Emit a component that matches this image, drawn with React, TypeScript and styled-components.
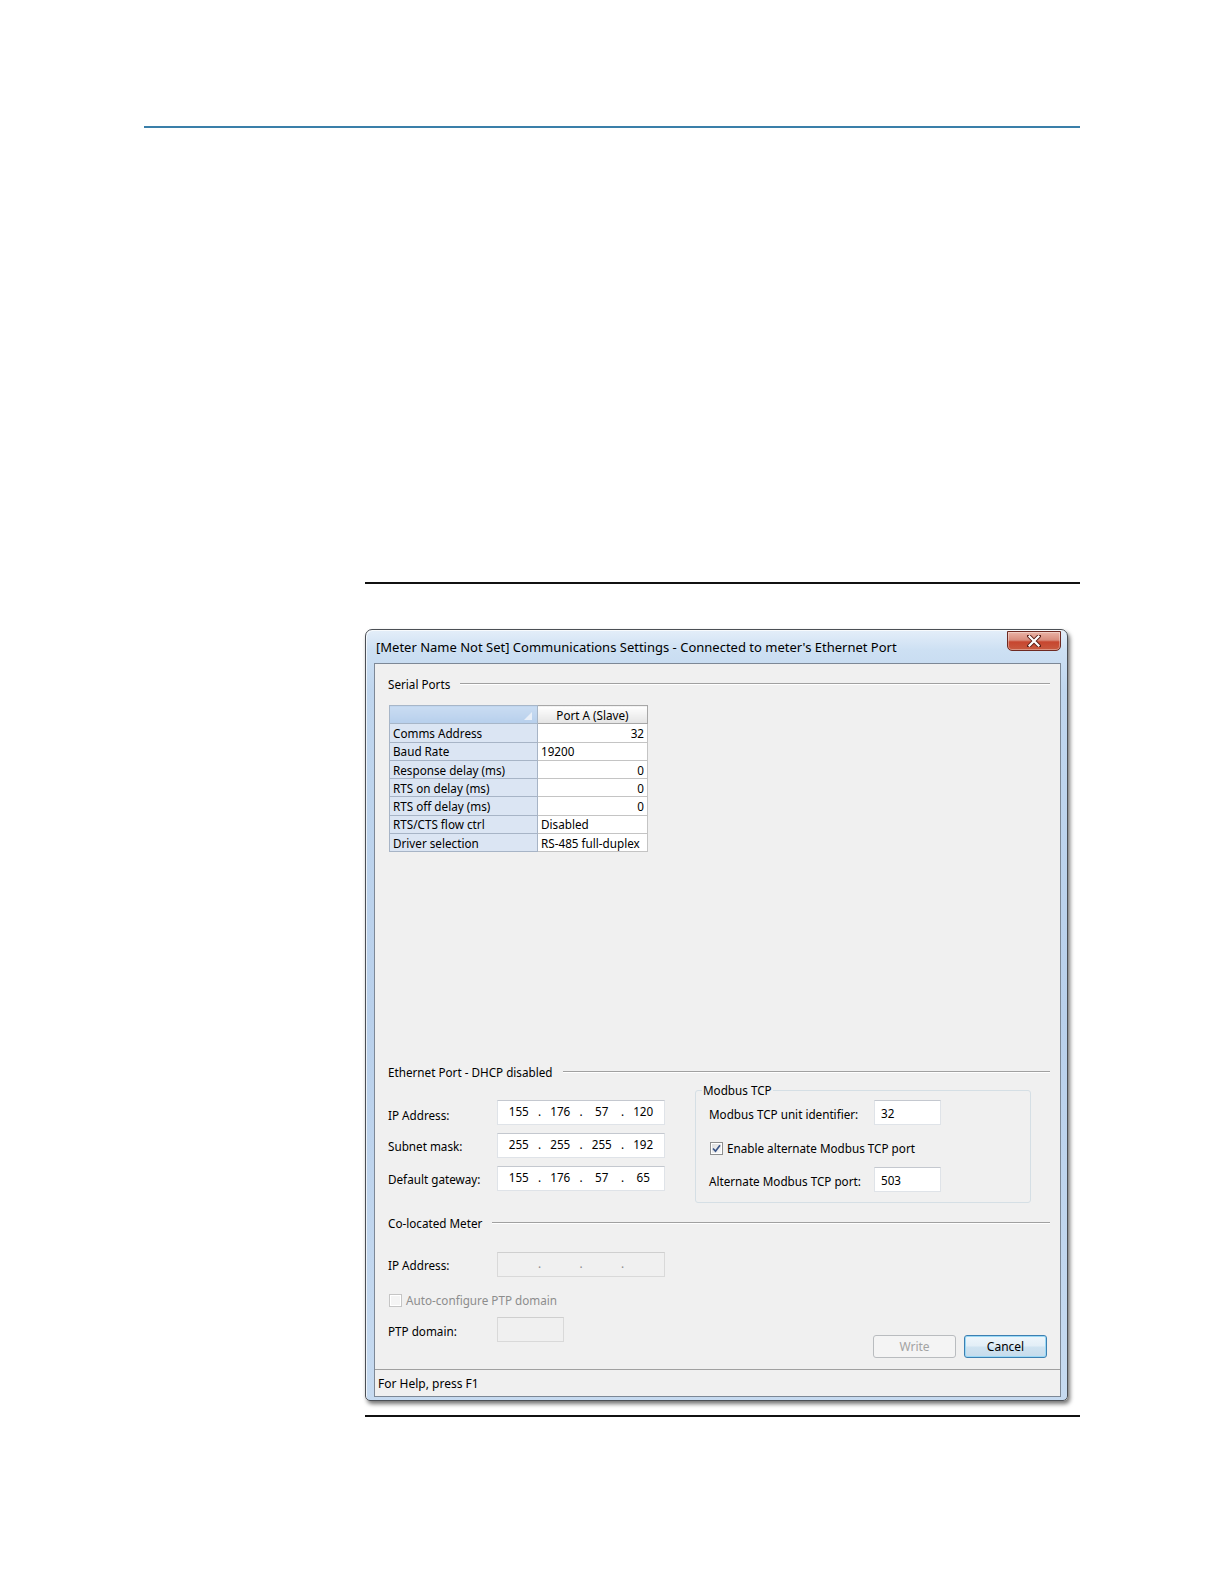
import React from 'react';
import styled, { createGlobalStyle, css } from 'styled-components';

const UI_FONT = '"Noto Sans", "Open Sans", "Liberation Sans", sans-serif';

const GlobalStyle = createGlobalStyle`
	html, body {
		margin: 0;
		padding: 0;
		background: #fff;
	}
	body {
		font-family: ${UI_FONT};
		font-size: 11.7px;
		color: #000;
	}
`;

const TITLE = "[Meter Name Not Set] Communications Settings - Connected to meter's Ethernet Port";

const Page = styled.div`
	width: 1224px;
	height: 1584px;
	padding-top: 126px;
	box-sizing: border-box;
	overflow: hidden;
`;

const TopRule = styled.div`
	margin-left: 144px;
	width: 936px;
	height: 2px;
	background: #3a7fa9;
`;

const Figure = styled.div`
	margin-left: 365px;
	width: 715px;
`;

const Blank = styled.div`
	height: 454px;
`;

const Rule = styled.div<{ gap: number }>`
	margin-top: ${({ gap }) => gap}px;
	height: 2px;
	background: #111;
`;

const Window = styled.div`
	margin-top: 45px;
	width: 703px;
	height: 772px;
	box-sizing: border-box;
	border: 1px solid #4b4f55;
	border-radius: 7px 7px 5px 5px;
	padding: 0 6px 3px 8px;
	display: flex;
	flex-direction: column;
	background: linear-gradient(180deg, #e4eef9 0px, #cde0f3 20px, #c0d6ee 60px, #b9d0eb 50%, #c6daf0 100%);
	box-shadow: 2px 3px 4px rgba(0, 0, 0, 0.55), inset 1px 1px 0 rgba(255, 255, 255, 0.7);
`;

const TitleBar = styled.div`
	height: 33px;
	display: flex;
	align-items: center;
	padding-left: 2px;
`;

const TitleText = styled.div`
	flex: 1;
	font-size: 13px;
	white-space: nowrap;
	color: #000;
`;

const CloseButton = styled.div`
	align-self: flex-start;
	margin-top: 1px;
	width: 54px;
	height: 20px;
	box-sizing: border-box;
	border: 1px solid #6e2a22;
	border-radius: 0 0 5px 5px;
	background: linear-gradient(180deg, #eab3a6 0%, #d88c7c 45%, #c7462f 55%, #c85a40 100%);
	display: flex;
	align-items: center;
	justify-content: center;
	box-shadow: inset 0 0 0 1px rgba(255, 255, 255, 0.35);
`;

const Client = styled.div`
	flex: 1;
	display: flex;
	flex-direction: column;
	border: 1px solid #7d8896;
	background: #f0f0f0;
`;

const Body = styled.div`
	flex: 1;
	display: flex;
	flex-direction: column;
	padding: 12px 10px 0 13px;
`;

const StatusBar = styled.div`
	height: 27px;
	box-sizing: border-box;
	border-top: 1px solid #a0a0a0;
	padding-left: 3px;
	display: flex;
	align-items: center;
	font-size: 12px;
`;

const GroupHeader = styled.div<{ top: number }>`
	margin-top: ${({ top }) => top}px;
	height: 16px;
	display: flex;
	align-items: center;
	white-space: nowrap;
	&::after {
		content: '';
		flex: 1;
		margin-left: 10px;
		border-top: 1px solid #a0a0a0;
		border-bottom: 1px solid #fff;
	}
`;

const Grid = styled.table`
	margin: 13px 0 0 1px;
	border-collapse: collapse;
	width: 259px;
	table-layout: fixed;
	border: 1px solid #8c8c8c;
	td, th {
		padding: 0 3px;
		height: 17.3px;
		line-height: 16px;
		font-weight: normal;
		white-space: nowrap;
		overflow: hidden;
	}
`;

const CornerCell = styled.th`
	position: relative;
	width: 141px;
	background: linear-gradient(180deg, #c9dcf2, #b7cfec);
	border: 1px solid #a7b6c8;
	svg {
		position: absolute;
		right: 5px;
		bottom: 3px;
	}
`;

const HeadCell = styled.th`
	height: 18px;
	background: linear-gradient(180deg, #ffffff, #f1f1f1 50%, #e4e4e4);
	border: 1px solid #a7a7a7;
	text-align: center;
`;

const NameCell = styled.td`
	background: #dbe5f3;
	border: 1px solid #a7b4c6;
	text-align: left;
`;

const ValueCell = styled.td<{ right?: boolean }>`
	background: #fff;
	border: 1px solid #c4c4c4;
	text-align: ${({ right }) => (right ? 'right' : 'left')};
`;

const EthernetSection = styled.div`
	display: flex;
	align-items: flex-start;
`;

const FieldColumn = styled.div`
	margin-top: 20px;
	display: flex;
	flex-direction: column;
	gap: 8px;
`;

const FieldRow = styled.div<{ top?: number }>`
	display: flex;
	align-items: flex-start;
	margin-top: ${({ top }) => top ?? 0}px;
`;

const FieldLabel = styled.div<{ width: number; drop?: number; disabled?: boolean }>`
	width: ${({ width }) => width}px;
	line-height: 16px;
	margin-top: ${({ drop }) => drop ?? 5}px;
	white-space: nowrap;
	color: ${({ disabled }) => (disabled ? '#8d8d8d' : '#000')};
`;

const TextBox = styled.div<{ width: number; disabled?: boolean }>`
	width: ${({ width }) => width}px;
	height: 25px;
	box-sizing: border-box;
	padding: 0 6px;
	display: flex;
	align-items: center;
	border: 1px solid #dfe3e8;
	border-top-color: #c4c8cf;
	background: ${({ disabled }) => (disabled ? '#f0f0f0' : '#fff')};
	color: ${({ disabled }) => (disabled ? '#8d8d8d' : '#000')};
	${({ disabled }) =>
		disabled &&
		css`
			border-color: #d9d9d9;
			border-top-color: #cfcfcf;
		`}
`;

const IpBox = styled(TextBox)`
	padding: 0 2px;
`;

const Octet = styled.span`
	width: 38px;
	text-align: center;
	margin-top: -3px;
`;

const Dot = styled.span`
	width: 4px;
	text-align: center;
	margin-top: -3px;
`;

const ModbusBox = styled.fieldset`
	margin: 2px 0 0 30px;
	width: 336px;
	box-sizing: border-box;
	padding: 0 0 10px 6px;
	border: 1px solid #d5dfe5;
	border-radius: 3px;
	min-inline-size: 0;
`;

const Legend = styled.legend`
	padding: 0 1px;
	line-height: 16px;
`;

const ModbusRows = styled.div`
	padding-left: 7px;
	display: flex;
	flex-direction: column;
`;

const CheckRow = styled.div<{ top: number; disabled?: boolean }>`
	margin-top: ${({ top }) => top}px;
	height: 16px;
	display: flex;
	align-items: center;
	gap: 4px;
	padding-left: 1px;
	color: ${({ disabled }) => (disabled ? '#8d8d8d' : '#000')};
`;

const CheckBoxFrame = styled.span<{ disabled?: boolean }>`
	width: 13px;
	height: 13px;
	box-sizing: border-box;
	border: 1px solid ${({ disabled }) => (disabled ? '#c5c5c5' : '#8e8f8f')};
	background: ${({ disabled }) => (disabled ? '#f4f4f4' : 'linear-gradient(135deg, #dcdcdc, #fbfbfb)')};
	box-shadow: inset 0 0 0 1px #fff;
	display: flex;
	align-items: center;
	justify-content: center;
`;

const BottomRow = styled.div`
	margin-top: 9px;
	min-height: 41px;
	display: flex;
	justify-content: space-between;
`;

const ButtonGroup = styled.div`
	align-self: flex-end;
	display: flex;
	gap: 8px;
	margin-right: 3px;
`;

const PushButton = styled.div<{ primary?: boolean; disabled?: boolean }>`
	width: 83px;
	height: 23px;
	box-sizing: border-box;
	border-radius: 3px;
	display: flex;
	align-items: center;
	justify-content: center;
	font-size: 12px;
	${({ primary, disabled }) =>
		disabled
			? css`
					border: 1px solid #b9bcbf;
					background: #f4f4f4;
					color: #a3a3a3;
			  `
			: primary
			? css`
					border: 1px solid #3c7fb1;
					background: linear-gradient(180deg, #eef6fb 0%, #e2eef7 48%, #cfe3f1 52%, #c6dbeb 100%);
					box-shadow: inset 0 0 0 1px #9ad8f5;
					color: #000;
			  `
			: css`
					border: 1px solid #707070;
					background: linear-gradient(180deg, #f2f2f2, #ebebeb 50%, #dddddd 50%, #cfcfcf);
			  `}
`;

const CornerMark = () => (
	<svg width="8" height="8" viewBox="0 0 8 8">
		<polygon points="8,0 8,8 0,8" fill="#e9eff8" />
	</svg>
);

const CloseGlyph = () => (
	<svg width="14" height="12" viewBox="0 0 14 12">
		<path d="M2 1 L12 11 M12 1 L2 11" stroke="#5a1e17" strokeWidth="4" strokeLinecap="square" />
		<path d="M2.5 1.5 L11.5 10.5 M11.5 1.5 L2.5 10.5" stroke="#fff" strokeWidth="2.2" strokeLinecap="square" />
	</svg>
);

const CheckGlyph = () => (
	<svg width="9" height="9" viewBox="0 0 9 9">
		<path d="M1 4.5 L3.5 7.2 L8 1.2" stroke="#3c5688" strokeWidth="1.7" fill="none" />
	</svg>
);

const CheckBox = ({ checked, disabled }: { checked?: boolean; disabled?: boolean }) => (
	<CheckBoxFrame disabled={disabled}>{checked && <CheckGlyph />}</CheckBoxFrame>
);

const IpAddress = ({ parts, disabled }: { parts: string[]; disabled?: boolean }) => (
	<IpBox width={168} disabled={disabled}>
		{parts.map((p, i) => (
			<React.Fragment key={i}>
				{i > 0 && <Dot>.</Dot>}
				<Octet>{p}</Octet>
			</React.Fragment>
		))}
	</IpBox>
);

const serialRows: { name: string; value: string; right?: boolean }[] = [
	{ name: 'Comms Address', value: '32', right: true },
	{ name: 'Baud Rate', value: '19200' },
	{ name: 'Response delay (ms)', value: '0', right: true },
	{ name: 'RTS on delay (ms)', value: '0', right: true },
	{ name: 'RTS off delay (ms)', value: '0', right: true },
	{ name: 'RTS/CTS flow ctrl', value: 'Disabled' },
	{ name: 'Driver selection', value: 'RS-485 full-duplex' },
];

export default function App() {
	return (
		<Page>
			<GlobalStyle />
			<TopRule />
			<Figure>
				<Blank />
				<Rule gap={0} />
				<Window>
					<TitleBar>
						<TitleText>{TITLE}</TitleText>
						<CloseButton>
							<CloseGlyph />
						</CloseButton>
					</TitleBar>
					<Client>
						<Body>
							<GroupHeader top={0}>Serial Ports</GroupHeader>
							<Grid>
								<thead>
									<tr>
										<CornerCell>
											<CornerMark />
										</CornerCell>
										<HeadCell>Port A (Slave)</HeadCell>
									</tr>
								</thead>
								<tbody>
									{serialRows.map((r) => (
										<tr key={r.name}>
											<NameCell>{r.name}</NameCell>
											<ValueCell right={r.right}>{r.value}</ValueCell>
										</tr>
									))}
								</tbody>
							</Grid>

							<GroupHeader top={212}>Ethernet Port - DHCP disabled</GroupHeader>
							<EthernetSection>
								<FieldColumn>
									<FieldRow>
										<FieldLabel width={109} drop={7}>
											IP Address:
										</FieldLabel>
										<IpAddress parts={['155', '176', '57', '120']} />
									</FieldRow>
									<FieldRow>
										<FieldLabel width={109}>Subnet mask:</FieldLabel>
										<IpAddress parts={['255', '255', '255', '192']} />
									</FieldRow>
									<FieldRow>
										<FieldLabel width={109}>Default gateway:</FieldLabel>
										<IpAddress parts={['155', '176', '57', '65']} />
									</FieldRow>
								</FieldColumn>
								<ModbusBox>
									<Legend>Modbus TCP</Legend>
									<ModbusRows>
										<FieldRow top={2}>
											<FieldLabel width={165} drop={6}>
												Modbus TCP unit identifier:
											</FieldLabel>
											<TextBox width={67}>32</TextBox>
										</FieldRow>
										<CheckRow top={15}>
											<CheckBox checked />
											Enable alternate Modbus TCP port
										</CheckRow>
										<FieldRow top={11}>
											<FieldLabel width={165} drop={6}>
												Alternate Modbus TCP port:
											</FieldLabel>
											<TextBox width={67}>503</TextBox>
										</FieldRow>
									</ModbusRows>
								</ModbusBox>
							</EthernetSection>

							<GroupHeader top={12}>Co-located Meter</GroupHeader>
							<FieldRow top={21}>
								<FieldLabel width={109} drop={5}>
									IP Address:
								</FieldLabel>
								<IpAddress parts={['', '', '', '']} disabled />
							</FieldRow>
							<CheckRow top={15} disabled>
								<CheckBox disabled />
								Auto-configure PTP domain
							</CheckRow>
							<BottomRow>
								<FieldRow>
									<FieldLabel width={109} drop={6}>
										PTP domain:
									</FieldLabel>
									<TextBox width={67} disabled />
								</FieldRow>
								<ButtonGroup>
									<PushButton disabled>Write</PushButton>
									<PushButton primary>Cancel</PushButton>
								</ButtonGroup>
							</BottomRow>
						</Body>
						<StatusBar>For Help, press F1</StatusBar>
					</Client>
				</Window>
				<Rule gap={14} />
			</Figure>
		</Page>
	);
}
